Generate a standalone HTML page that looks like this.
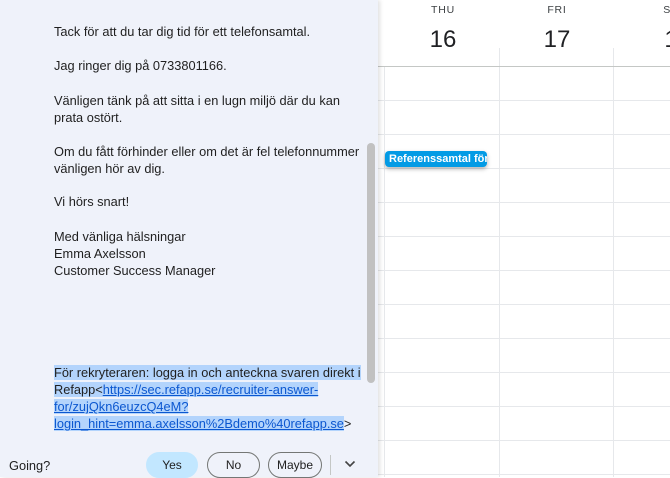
<!DOCTYPE html>
<html><head><meta charset="utf-8"><style>
*{margin:0;padding:0;box-sizing:border-box}
body{width:670px;height:477px;overflow:hidden;background:#fff;font-family:"Liberation Sans",Arial,sans-serif;position:relative}
.cal{position:absolute;left:378px;top:0;width:292px;height:477px;background:#fff}
.hl{position:absolute;left:0;right:0;height:1px;background:#e6e8eb}
.vl{position:absolute;top:48px;bottom:0;width:1px;background:#e6e8eb}
.dow{position:absolute;top:4px;font-size:10.5px;color:#3c4043;letter-spacing:.8px;text-align:center;width:60px}
.day{position:absolute;top:26px;font-size:24px;color:#202124;text-align:center;width:60px}
.ev{position:absolute;left:7px;top:151px;width:102px;height:16px;background:#039be5;border-radius:4px;color:#fff;font-size:11px;font-weight:bold;line-height:16px;padding-left:4px;white-space:nowrap;overflow:hidden;box-shadow:0 2px 4px rgba(0,0,0,.3)}
.panel{position:absolute;left:0;top:0;width:378px;height:477px;background:#eff2fa;box-shadow:2px 0 4px rgba(0,0,0,.12)}
.txt{position:absolute;left:54px;font-size:12.8px;color:#1f1f1f;line-height:17px;white-space:nowrap}
.sel{background:#b3d4fc}
a{color:#0b57d0;text-decoration:underline}
.sb{position:absolute;left:367px;top:143px;width:8px;height:240px;background:#c1c1c1;border-radius:4px}
.bar{position:absolute;left:0;top:445px;width:378px;height:32px}
.btn{position:absolute;top:452px;height:26px;border:1px solid #747775;border-radius:13px;font-size:12px;text-align:center;line-height:24px;color:#1f1f1f}
</style></head><body>
<div class="cal">
<div class="dow" style="left:35px">THU</div>
<div class="dow" style="left:149px">FRI</div>
<div class="dow" style="left:263px">SA</div>
<div class="day" style="left:35px">16</div>
<div class="day" style="left:149px">17</div>
<div class="day" style="left:263px">1</div>
<div class="vl" style="left:6px;top:66px"></div>
<div class="vl" style="left:121px"></div>
<div class="vl" style="left:235px"></div>
<div class="hl" style="top:66px;background:#c4c7c5"></div>
<div class="hl" style="top:100px"></div><div class="hl" style="top:134px"></div><div class="hl" style="top:168px"></div><div class="hl" style="top:202px"></div><div class="hl" style="top:236px"></div><div class="hl" style="top:270px"></div><div class="hl" style="top:304px"></div><div class="hl" style="top:338px"></div><div class="hl" style="top:372px"></div><div class="hl" style="top:406px"></div><div class="hl" style="top:440px"></div><div class="hl" style="top:474px"></div>
<div class="ev">Referenssamtal för Sv</div>
</div>
<div class="panel">
<div class="txt" style="top:23px">Tack för att du tar dig tid för ett telefonsamtal.</div>
<div class="txt" style="top:57px">Jag ringer dig på 0733801166.</div>
<div class="txt" style="top:92px">Vänligen tänk på att sitta i en lugn miljö där du kan<br>prata ostört.</div>
<div class="txt" style="top:143px">Om du fått förhinder eller om det är fel telefonnummer<br>vänligen hör av dig.</div>
<div class="txt" style="top:193px">Vi hörs snart!</div>
<div class="txt" style="top:228px">Med vänliga hälsningar<br>Emma Axelsson<br>Customer Success Manager</div>
<div class="txt" style="top:364px"><span class="sel">För rekryteraren: logga in och anteckna svaren direkt i </span><br><span class="sel">Refapp&lt;<a>https://sec.refapp.se/recruiter-answer-</a></span><br><span class="sel"><a>for/zujQkn6euzcQ4eM?</a></span><br><span class="sel"><a>login_hint=emma.axelsson%2Bdemo%40refapp.se</a></span>&gt;</div>
<div class="sb"></div>
<div class="bar">
<div style="position:absolute;left:9px;top:13px;font-size:12.8px;color:#1f1f1f">Going?</div>
</div>
<div class="btn" style="left:146px;width:52px;background:#c2e7ff;border-color:#c2e7ff">Yes</div>
<div class="btn" style="left:207px;width:53px">No</div>
<div class="btn" style="left:268px;width:54px">Maybe</div>
<div style="position:absolute;left:330px;top:455px;width:1px;height:20px;background:#c4c7c5"></div>
<svg style="position:absolute;left:344px;top:460px" width="12" height="8" viewBox="0 0 12 8"><path d="M1.5 1.5L6 6L10.5 1.5" fill="none" stroke="#444" stroke-width="1.6"/></svg>
</div>
</body></html>
